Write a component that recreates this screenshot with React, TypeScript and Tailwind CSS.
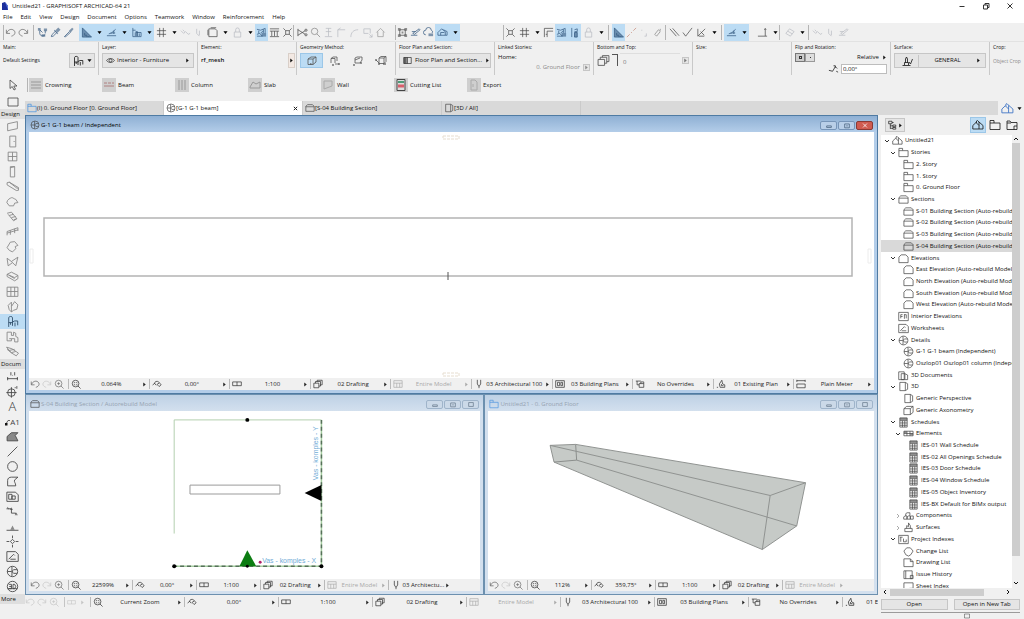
import { ReactNode } from 'react';
import clsx from 'clsx';

// d = stroked path, f = filled path, all on a 12x12 grid
const glyphs: Record<string, { d?: string; f?: string }> = {
  undo: { d: 'M1.500 3v4h4M2 6.500C3 3 7 1.500 9.500 3.500S11 9 7 10' },
  redo: { d: 'M10.500 3v4h-4M10 6.500C9 3 5 1.500 2.500 3.500S1 9 5 10' },
  pick: { d: 'M3 4v3c0 3 5 3.500 5.500 1.500M9 4v3M3 3l3 3', f: 'M1 1h3v3H1zM7.500 1.500h3.500v3H7.500zM5 8h4v2.500H5z' },
  dropper: { d: 'M1.500 10.500l.5-2 4-4 1.500 1.500-4 4z', f: 'M6 3.500L9 .5l2.500 2.500-3 3zM5 3l4 4-.8.800-4-4z' },
  syringe: { d: 'M1.500 10.500l5.500-5.500 1 1-5 4.500z', f: 'M6.500 4L10 .8 11.500 2.200 8.500 6z' },
  ruler: { d: 'M1.500 1v10h10zM4 6.500v2.500h2.500M6.500 11V9.500M8.500 11v-1', f: 'M1.500 1v10h10zM4 6.500v2.500h2.500z' },
  snap: { d: 'M1 9.500h10M3 7.500l3-1 4.500-4M5 6.500h5M8.500 7.500V4' },
  gridbox: { d: 'M2 1v9.500h9V6H5M5 5h2v5M9 7v3M2 3.500h3', f: 'M4 6h3v4H4z' },
  hash: { d: 'M4 1v10M8 1v10M1 4h10M1 8h10' },
  wave: { d: 'M1 4l3 3 2-2 3 3 2-1M3 3l2 2' },
  brush: { d: 'M4 2v5l3 3M7 4v5' },
  doc: { d: 'M2 2h7l2 2v6.500H2zM4 .8h6M1 3v6' },
  lock: { d: 'M2.500 5.500h7V11h-7zM4 5.500V3a2 2 0 0 1 4 0v2.500' },
  sheets: { d: 'M1 2.500l4 1 5-2v5M3 4v3M8 2.500v4M5 6.500l3-2M1 8l3-1 3 3H1', f: 'M6 6.500h5v4H6z' },
  columns: { d: 'M1 2h10M3 4.500V10M6 4.500V10M9 4.500V10M1 10.500h10M1 4.500h10' },
  cross: { d: 'M1.500 1.500L4 4M10.500 1.500L8 4M1.500 10.500L4 8M10.500 10.500L8 8M4 4h4v4H4z' },
  scissors: { d: 'M1 3l8 5M1 9l8-5M11 8.500a1.200 1.200 0 1 1-2.400 0 1.200 1.200 0 0 1 2.400 0M11 3.500a1.200 1.200 0 1 1-2.400 0 1.200 1.200 0 0 1 2.400 0M1 2v8' },
  search: { d: 'M7.500 7.500L11 11M8.500 4.800a3.500 3.500 0 1 1-7 0 3.500 3.500 0 0 1 7 0' },
  ibeam: { d: 'M3 1.500h6M6 1.500V10M2 10.500h8M3 5h6' },
  corner: { d: 'M2 11V3h8M5 1l-3 2' },
  arc: { d: 'M2 11c0-5 3-8 8-8' },
  stretch: { d: 'M2 2h7v5M2 2v5h5M8 8l3 3M11 8v3H8' },
  house: { d: 'M1.500 6L6 1.500 10.500 6M3 5v5.500h6V5' },
  group: { d: 'M3 3h6v6H3z', f: 'M1 1h3v3H1zM8 1h3v3H8zM1 8h3v3H1zM8 8h3v3H8zM5 5h2v2H5z' },
  edit: { d: 'M1 9h7M3 7l7-5 1 1-6 5zM2 5h4' },
  cloud: { d: 'M3 8.500a2.500 2.500 0 0 1 0-5 3 3 0 0 1 6 0 2 2 0 0 1 1 3', f: 'M6 7h5v3H6z' },
  loop: { d: 'M1 9V6l4-4 4 3v4zM4 9V6h4M7 3l4 2v4H9' },
  wall: { d: 'M1.500 11V1.500H11M4.500 11V4.500H11M3 8h1.500' },
  flagcol: { d: 'M3 1v10M6 3l3-1v3H6M6 6h3v5H6z', f: 'M6 6h3v5H6z' },
  dash: { d: 'M1 11l3-3M5.500 6.500l1-1M8 4l3-3' },
  pair: { d: 'M3 3v1M8 7v3H6' },
  magnet: { d: 'M3 8l4-5 2 2-4 5zM9 2v2' },
  parallel: { d: 'M1 2l7 8M4 1.500l7 8' },
  tick: { d: 'M1 6l3 4 7-9' },
  angle: { d: 'M2 2v8l8-8M3 10h6M5 5l4 4' },
  axis: { d: 'M1 10h8V2M9 10h2M8 3l1-1.500L10 3' },
  eraser: { d: 'M2 7l4-5 5 3-4 5zM4 4.500l5 3' },
  eye: { d: 'M.8 6C3 2.500 9 2.500 11.200 6 9 9.500 3 9.500.8 6zM8 6a2 2 0 1 1-4 0 2 2 0 0 1 4 0' },
  chair: { d: 'M2.500 11V2.500c0-1.500 3.500-1.500 3.500 0V6.500M2.500 7H6M6 6.500l2-1h2.800v4M6 6.500v3.500M8.300 7v3.500M4.200 7v2' },
  cube: { d: 'M2 4l3-2h5v5l-3 2.500H2zM2 4h5v5.500M7 4l3-2', f: 'M4 8h1.500v2H4z' },
  cubeA: { d: 'M2 8V3.500L4 2h4v4M2 3.500h4V8M6 9h4', f: 'M3 9h2v2H3zM9 8h2v2H9z' },
  cubeB: { d: 'M3 3l2-1h5v3L8 8H3zM3 5l5-2', f: 'M1 9h2v2H1zM8 7h2v2H8z' },
  cubeC: { d: 'M4 3l2-1.500h5v5L9 8.500H4zM4 3h5v5.500M9 3l2-1.500M1 5l3 3', f: 'M0 4h2v2H0zM3 8h2v2H3zM8 8h3v2H8z' },
  planhalf: { d: 'M1 2h10v8H1zM6 2v8', f: 'M1 2h4v8H1z' },
  marker: { d: 'M1.500 10.500h8M3.500 10V7.500h4V10M4.500 7.500V4l1-2 1 2v3.500M8 7l1.500 2L11.500 4' },
  angleIn: { d: 'M1 8l4 1 3-5 2 2M6 3h2v2M9 9l2 1' },
  cursor: { d: 'M3 1v8.500l2.200-2L7 11l1.500-.8L6.800 7H10z' },
  marquee: { d: 'M1 2h10v8H1z' },
  toolWall: { d: 'M1.500 3.500l9-2v6.500l-5 1-4 1z' },
  toolDoor: { d: 'M3.500 1h5.500v10H3.500zM7 6h1' },
  toolWindow: { d: 'M2 2h8v8H2zM6 2v8M2 6h8' },
  toolColumn: { d: 'M4 1.500h4V11H4zM4 2.500l4-1' },
  toolBeam: { d: 'M1 2.500l2-.5 8.500 5v2.500l-2 .2L1 4.500zM3 2l7 5.500h1.500' },
  toolSlab: { d: 'M.8 7C1 4 4 3 5 2.500s2 1 4 1.500l2 3-3 .5-1 2.500H3z' },
  toolStair: { d: 'M1 3l4-1 5 6-3 2-5-6M3 5l4-1M5 7l4-1M7 9l3-1' },
  toolRail: { d: 'M1 9.500V6l10-3.500v3M4 9V5M8 7.500V3.500M1 7.500l10-3' },
  toolRoof: { d: 'M1 7l3-5 4-.5L11 5 8.500 6l.5 2-3 3-3-1.500z' },
  toolShell: { d: 'M1 3l4 3 6-4-2 8-3-3-4 3zM5 6l1 1' },
  toolSky: { d: 'M1 4l4-2 6 3v3L8 10 1 6zM3 5l5 3M1 4l7 3 3-2' },
  toolCurtain: { d: 'M1 2h10v8.500H1zM1 6h10M4.500 2v8.500M8 2v8.500' },
  toolMorph: { d: 'M2 5l3-3v4l3-4.500 3 3-1 4-3 1-2 1.500L3 9zM5 6v5' },
  toolZone: { d: 'M1 2h4v3h2V2l2 1v3l2 1v4H8V8H5v2H1zM3 8h2' },
  toolMesh: { d: 'M.5 2l5 1.500 6 4-2 2.500-5-3zM3 5l5-1M5 7l4-1M1 4l4 3' },
  dimension: { d: 'M1 8h10M1.500 6.500v3M10.500 6.500v3M4.500 2v3M6 5h.500M8 2v3' },
  level: { d: 'M8.500 7a3.500 3.500 0 1 1-7 0 3.500 3.500 0 0 1 7 0M.3 7h9.500M5 2v9.700M8 2.500h1M10 1v2.500' },
  fill: { d: 'M1 10V6l4-3.500h6L8.500 5l2.500 5z', f: 'M1 10V6l4-3.500h6L8.500 5l2.500 5z' },
  line: { d: 'M1.500 10.500l9-9' },
  circle: { d: 'M10.500 6a4.500 4.500 0 1 1-9 0 4.500 4.500 0 0 1 9 0' },
  poly: { d: 'M1.500 10V5c0-2 1.500-3 3.500-3h6L8 4.500c-1 2 1 2.500 1 5.500z' },
  drawing: { d: 'M.8 2h8l2.500 2.500V10.500H.8zM2.500 4h3v4.500h-3zM5.500 5.500h3v3h-3z' },
  spline: { d: 'M1.500 3.500h3.500v4h4v1', f: 'M0 4l1.500-2.500L3 4zM3.500 4.500L5 2l1.500 2.500zM8 9.500l1.500-2.500 1.500 2.500z' },
  section: { d: 'M.5 9.500h11', f: 'M4 9L6 5l2 4z' },
  target: { d: 'M6 .5V3M6 9v2.500M.5 6H3M9 6h2.500M6 4l2 2-2 2-2-2z' },
  worksheet: { d: 'M.8 1.500h8l2.500 2.500v6.500H.8zM2.500 8.500L7 4l1 1M4 8.500h5' },
  globe: { d: 'M10.800 6A4.800 4.800 0 1 1 1.200 6a4.800 4.800 0 0 1 9.600 0M1.200 6h4M10.300 4.300H7a2 2 0 0 0 0 3.400h3.300M5.500 1.500v9' },
  globe3: { d: 'M10.800 6A4.800 4.800 0 1 1 1.200 6a4.800 4.800 0 0 1 9.600 0M2.500 4h2.500v4H2.500M3 6h2M6.500 8V4H8l1 2-1 2zM1.500 8h9' },
  folder: { d: 'M1 10.500V1.500h4V4h6v6.500zM1 4h4' },
  sect: { d: 'M1 10V4l2-2h6l2 2v6zM1 4.500h10' },
  elev: { d: 'M1 10.500V4.500L3.500 2h5L11 4.500v6z' },
  cubeDoc: { d: 'M2 1.500h6l2.500 1.500v6L8 10.500H2zM8 1.500v9' },
  home: { d: 'M.8 10V6.500L4 3.500l3 3V10zM4.500 4V2l1-.5L7 3l4 3.500V10H7M7 3v3.500' },
  chooser: { d: 'M2 1.500h4v3H2zM4 4.500v6M4 7h3M4 10h3M7 6h3.500v2H7zM7 9h3.500v2H7zM6 3h2' },
  clone: { d: 'M1 2h3l1 1.500h6v7H1zM8 7h3M8 7v3.500M1 4h4' },
  interior: { d: 'M.8 1.500h10.400v9H.8zM3 4v4M3 4h2M3 6h2M7 3.500v5M9 4v4M7 4h2' },
  docs3: { d: 'M.8 2h6v8.500h-6zM3.500 4h4l3 1.500v5h-7zM7.500 4v6' },
  axo: { d: 'M1 4l3-2.500h7V8l-3 2.500H1zM1 4h7v6.500M8 4l3-2.500' },
  table: { d: 'M2 1h8v10H2zM2 4h8M2 6.500h8M2 9h8M4.800 4v7M7.400 4v7', f: 'M2 1h8v2.500H2z' },
  bricks: { d: 'M1 3.500h10v5H1zM4.300 3.500v5M7.600 3.500v5M1 6h10', f: 'M1 3.500h3v2H1zM8 6h3v2H8z' },
  comps: { d: 'M.8 10V7.500l1.500-1h2V10zM4.500 10V7.500l1.500-1h2V10zM8 10V7.500l1-1h2.200V10zM3 6.500V4l1.500-1h3v3.500' },
  surf: { d: 'M2 10.500h8V7H2zM4 7V4l2 1V1l2 3v3' },
  index: { d: 'M.8 1.500h10.400v9H.8zM3 3.500v5M2 3.500h3M6 5v3.500h3V6' },
  change: { d: 'M4 2h4l3 3.500L8.500 9.500 6 11 3 9.500 1 5.500z' },
  dwglist: { d: 'M1 2h7l3 3v5.500H1zM8 2v3h3' },
  issue: { d: 'M1 2h9v8.500H1zM3 2v8.500M8 7h3v3.500H8z' },
  sheet: { d: 'M1 2h10v8.500H1zM7 8h4' },
  zoomIn: { d: 'M8.300 8.300L11.500 11.500M9.500 5.500a4 4 0 1 1-8 0 4 4 0 0 1 8 0M3.800 5.500h3.500M5.500 3.800v3.500' },
  zoomFit: { d: 'M8.300 8.300L11.500 11.500M9.500 5.500a4 4 0 1 1-8 0 4 4 0 0 1 8 0', f: 'M3.500 3.500h2L3.500 5.500zM7.500 7.500h-2l2-2zM7.500 3.500v2l-2-2zM3.500 7.500v-2l2 2z' },
  rotate: { d: 'M.8 7.500L3 5l2 2.500M3 5.500C3 3 6 2 8 3.500L11 7 8.500 9 6 6.500 8.500 5' },
  scale: { d: 'M.8 3.500h10.400V8H.8zM6 3.500V8' },
  layers: { d: 'M1 5h6v5.500H1zM3 5V3h6v5.500H7M5 3V1.500h6V7H9' },
  model: { d: 'M1 2h10v8H1zM1 5h10M4.500 5v5M8 5v5' },
  pen: { d: 'M4 1v5l2 3 2-3V1M6 9v2' },
  plans: { d: 'M.8 2h10.400v8H.8zM3 4h2.500v4H3zM7 4h2v4H7z' },
  overrides: { d: 'M5 10V5.500h5.500V10zM7 5.500V3.500h3.500v2M1 2.500h6M2.500 2.500V7H5' },
  reno: { d: 'M1 10h1.500M5 10L4 6l3-4.500L8 6l2.500 1v3zM6.500 6v2H9' },
  meter: { d: 'M1 6h10v4.500H1zM1 2h10M1 1v2.500M11 1v2.500' },
};

function Icon({ name, className }: { name: string; className?: string }) {
  const g = glyphs[name];
  return (
    <svg viewBox="0 0 12 12" className={clsx('shrink-0', className ?? 'size-3')} aria-hidden="true">
      {g.f && <path d={g.f} fill="currentColor" opacity="0.6" />}
      {g.d && <path d={g.d} fill="none" stroke="currentColor" strokeWidth="0.8" />}
    </svg>
  );
}

const Caret = ({ down }: { down?: boolean }) => (
  <svg viewBox="0 0 6 6" className="size-[5px] shrink-0" aria-hidden="true">
    <path d={down ? 'M.5 1.500h5L3 4.800z' : 'M1.500.5v5L4.500 3z'} fill="currentColor" />
  </svg>
);

// ---------- Title + menu ----------
const menuItems = ['File', 'Edit', 'View', 'Design', 'Document', 'Options', 'Teamwork', 'Window', 'Reinforcement', 'Help'];

const TitleBar = () => (
  <header className="shrink-0 bg-white">
    <div className="flex h-3 items-center justify-between pl-[2px] pr-[9px]">
      <div className="flex items-center gap-[4px]">
        <svg viewBox="0 0 6 8" className="h-2 w-[6px]" aria-hidden="true">
          <path d="M0 1l3-1 3 4v4H0z" fill="#1c2f9c" />
          <path d="M3 0l3 4v4z" fill="#5a78dc" />
        </svg>
        <h1 className="leading-3">Untitled21 - GRAPHISOFT ARCHICAD-64 21</h1>
      </div>
      <div className="flex items-center gap-[14px]">
        <button aria-label="Minimize">
          <svg viewBox="0 0 10 10" className="size-[10px]"><path d="M2.500 5.500h5" stroke="#333" fill="none" /></svg>
        </button>
        <button aria-label="Restore">
          <svg viewBox="0 0 10 10" className="size-[10px]"><path d="M2.500 4h4v4h-4zM4 4V2.500h4v4H6.500" stroke="#333" fill="none" /></svg>
        </button>
        <button aria-label="Close">
          <svg viewBox="0 0 10 10" className="size-[10px]"><path d="M2.500 2.500l5 5M7.500 2.500l-5 5" stroke="#333" fill="none" /></svg>
        </button>
      </div>
    </div>
    <nav className="flex h-[11px] items-center gap-2 pl-[3px]">
      {menuItems.map((item) => (
        <button key={item}>{item}</button>
      ))}
    </nav>
  </header>
);

// ---------- Icon toolbar ----------
type Tool = { icon: string; menu?: boolean; on?: boolean; tone?: string };

const Group = ({ tools, className }: { tools: Tool[]; className: string }) => (
  <div className={clsx('flex h-[15px] shrink-0 items-center', className)}>
    {tools.map((t, i) => (
      <button
        key={i}
        aria-label={t.icon}
        className={clsx(
          'flex h-[17px] shrink-0 items-center',
          t.on && 'bg-[#bcdcf4]',
          t.tone ?? 'text-[#4a4a4a]'
        )}
      >
        <span className={clsx('flex justify-center', t.menu ? 'w-[15px]' : 'w-[13px]')}>
          <Icon name={t.icon} className="size-[11px]" />
        </span>
        {t.menu && (
          <span className="flex w-[10px] justify-center text-black">
            <Caret down />
          </span>
        )}
      </button>
    ))}
  </div>
);

const faint = 'text-[#b9bcc2]';
const blue = 'text-[#33587f]';
const line = 'border-l border-[#b4b4b4]';

const Toolbar = () => (
  <div className="flex h-[18px] shrink-0 items-center overflow-hidden bg-[#f0f0f0]" role="toolbar">
    <Group className={clsx('ml-[3px] w-[30px]', line)} tools={[{ icon: 'undo', tone: 'text-[#666]' }, { icon: 'redo', tone: 'text-[#666]' }]} />
    <Group className={clsx('w-[46px] pl-[2px]', line)} tools={[{ icon: 'pick', tone: blue }, { icon: 'dropper', tone: blue }, { icon: 'syringe', tone: blue }]} />
    <Group
      className="w-[75px]"
      tools={[
        { icon: 'ruler', menu: true, on: true, tone: blue },
        { icon: 'snap', menu: true, on: true, tone: blue },
        { icon: 'gridbox', menu: true, on: true, tone: blue },
      ]}
    />
    <Group
      className="w-[139px]"
      tools={[
        { icon: 'hash', menu: true },
        { icon: 'wave', tone: faint },
        { icon: 'brush', tone: faint },
        { icon: 'doc', menu: true },
        { icon: 'lock', menu: true, tone: faint },
        { icon: 'sheets', on: true, tone: blue },
        { icon: 'columns' },
        { icon: 'cross' },
      ]}
    />
    <Group
      className={clsx('w-[102px] pl-[2px]', line)}
      tools={[
        { icon: 'scissors' },
        { icon: 'search', tone: 'text-[#888]' },
        { icon: 'ibeam', tone: faint },
        { icon: 'corner', tone: faint },
        { icon: 'arc', tone: faint },
        { icon: 'stretch', tone: faint },
        { icon: 'house', tone: 'text-[#999]' },
      ]}
    />
    <Group
      className={clsx('w-[108px]', line)}
      tools={[{ icon: 'group' }, { icon: 'edit', tone: blue }, { icon: 'cloud', tone: blue }, { icon: 'loop', menu: true, on: true, tone: blue }]}
    />
    <Group
      className={clsx('w-[105px]', line)}
      tools={[
        { icon: 'cross' },
        { icon: 'hash', menu: true },
        { icon: 'wall' },
        { icon: 'sheets', on: true, tone: blue },
        { icon: 'flagcol', on: true, tone: blue },
        { icon: 'lock', menu: true, tone: faint },
      ]}
    />
    <Group
      className={clsx('w-[57px] pl-[3px]', line)}
      tools={[{ icon: 'ruler', on: true, tone: blue }, { icon: 'dash', tone: 'text-[#c58a7a]' }, { icon: 'pair', tone: faint }, { icon: 'magnet', tone: 'text-[#888]' }]}
    />
    <Group className={clsx('w-[56px] pl-[2px]', line)} tools={[{ icon: 'parallel' }, { icon: 'tick' }, { icon: 'angle', menu: true }]} />
    <Group className={clsx('w-[58px] gap-[6px] pl-[2px]', line)} tools={[{ icon: 'snap', menu: true, on: true, tone: blue }, { icon: 'axis', menu: true }]} />
    <Group className={clsx('w-[29px] pl-[2px]', line)} tools={[{ icon: 'eraser', menu: true, tone: faint }]} />
    <Group className={clsx('pl-[2px]', line)} tools={[{ icon: 'wave', tone: faint }, { icon: 'brush', tone: faint }, { icon: 'edit', tone: faint }]} />
  </div>
);

// ---------- Info box ----------
const Panel = ({ label, children }: { label: string; children?: ReactNode }) => (
  <section className="flex w-[99px] shrink-0 flex-col border-r border-[#c9c9c9] px-[3px] last:w-auto last:flex-1 last:shrink last:border-r-0 last:pr-0">
    <h2 className="h-[11px] whitespace-nowrap text-[5px] leading-[11px]">{label}</h2>
    {children}
  </section>
);

const flat = 'flex items-center border border-[#c6c6c6] bg-[#e5e5e5]';

const InfoBox = () => (
  <div className="flex h-[34px] shrink-0 overflow-hidden border-t border-[#e2e2e2] bg-[#f0f0f0]">
    <Panel label="Main:">
      <div className="flex items-center justify-between">
        <span className="whitespace-nowrap text-[5px]">Default Settings</span>
        <button className={clsx(flat, 'h-[15px] w-[26px] justify-around')} aria-label="Default settings">
          <Icon name="chair" />
          <Caret down />
        </button>
      </div>
    </Panel>
    <Panel label="Layer:">
      <button className={clsx(flat, 'h-[15px] gap-[2px] px-[3px]')}>
        <Icon name="eye" className="size-[9px]" />
        <span className="flex-1 text-left">Interior - Furniture</span>
        <Caret />
      </button>
    </Panel>
    <Panel label="Element:">
      <div className="-mr-[2px] flex h-[15px] items-center justify-between">
        <span className="font-semibold">rf_mesh</span>
        <button className="flex h-[15px] w-[7px] items-center justify-center border border-[#d9cfc8] bg-[#f3e9e3]" aria-label="Element name">
          <Caret />
        </button>
      </div>
    </Panel>
    <Panel label="Geometry Method:">
      <div className="flex">
        {['cube', 'cubeA', 'cubeB', 'cubeC'].map((c, i) => (
          <button key={c} aria-label={c} className={clsx('flex h-[15px] w-[23px] items-center justify-center text-[#555]', i === 0 && 'border border-[#9cc7e8] bg-[#bcdcf4]')}>
            <Icon name={c} />
          </button>
        ))}
      </div>
    </Panel>
    <Panel label="Floor Plan and Section:">
      <button className={clsx(flat, 'h-[15px] gap-[3px] px-[3px]')}>
        <Icon name="planhalf" className="size-[9px]" />
        <span className="flex-1 whitespace-nowrap text-left">Floor Plan and Section...</span>
        <Caret />
      </button>
    </Panel>
    <Panel label="Linked Stories:">
      <span className="leading-[8px]">Home:</span>
      <div className="flex items-center justify-end gap-[3px] pt-[2px] text-[#8a8a8a]">
        <span>0. Ground Floor</span>
        <button className={clsx(flat, 'size-[7px] justify-center')} aria-label="Home story"><Caret /></button>
      </div>
    </Panel>
    <Panel label="Bottom and Top:">
      <div className="flex items-center gap-[2px] text-[#777]">
        <Icon name="layers" className="size-[13px] text-[#555]" />
        <span className="flex h-3 w-[6px] flex-col justify-between border-r border-t border-[#555]" />
        <span className="flex h-[14px] flex-1 flex-col justify-end border-t border-[#dedede] pl-[3px]">0</span>
        <button className={clsx(flat, 'size-[7px] justify-center')} aria-label="Top offset"><Caret /></button>
      </div>
    </Panel>
    <Panel label="Size:" />
    <Panel label="Flip and Rotation:">
      <div className="flex h-[9px] items-center justify-between">
        <div className="flex">
          <button className="flex h-[9px] w-[10px] items-center justify-center border border-[#777] bg-[#ccc]" aria-label="Flip"><span className="size-[3px] border border-[#333]" /></button>
          <button className="flex h-[9px] w-[10px] items-center justify-center border border-[#999] bg-[#ddd]" aria-label="Mirror"><span className="size-[1px] bg-[#333]" /></button>
        </div>
        <button className="flex items-center gap-[3px]">
          Relative <Caret />
        </button>
      </div>
      <div className="flex items-center justify-end gap-[2px] pt-[1px]">
        <Icon name="angleIn" className="size-[11px]" />
        <input aria-label="Rotation angle" defaultValue="0,00°" className="h-[10px] w-[46px] border border-[#bdbdbd] bg-white px-[1px] text-[6px]" />
      </div>
    </Panel>
    <Panel label="Surface:">
      <button className={clsx(flat, 'h-[15px]')}>
        <span className="flex w-6 justify-center border-r border-[#c6c6c6]"><Icon name="marker" /></span>
        <span className="flex-1">GENERAL</span>
        <span className="w-[9px]"><Caret /></span>
      </button>
    </Panel>
    <Panel label="Crop:">
      <span className="whitespace-nowrap pt-[4px] text-[5px] text-[#8a8a8a]">Object Crop</span>
    </Panel>
  </div>
);

// ---------- Toolbox ----------
const designTools = ['toolWall', 'toolDoor', 'toolWindow', 'toolColumn', 'toolBeam', 'toolSlab', 'toolStair', 'toolRail', 'toolRoof', 'toolShell', 'toolSky', 'toolCurtain', 'toolMorph', 'chair', 'toolZone', 'toolMesh'];
const documentTools = ['dimension', 'level', 'letterA', 'labelA1', 'fill', 'line', 'circle', 'poly', 'drawing', 'spline', 'section', 'target', 'worksheet', 'globe', 'globe3'];

const ToolHeading = ({ children }: { children: ReactNode }) => (
  <h3 className="h-[10px] overflow-hidden bg-[#dedede] pl-[1px] leading-[10px]">{children}</h3>
);

const ToolButton = ({ name, dark }: { name: string; dark?: boolean }) => (
  <button
    aria-label={name}
    className={clsx('flex h-[15px] w-full items-center justify-center', name === 'chair' ? 'bg-[#bcdcf4] text-[#2c4a66]' : dark ? 'text-[#444]' : 'text-[#858585]')}
  >
    {name === 'letterA' && <span className="text-[13px] font-light">A</span>}
    {name === 'labelA1' && (
      <span className="flex items-center text-[8px]">
        <svg viewBox="0 0 5 8" className="h-2 w-[5px]" aria-hidden="true">
          <path d="M0 5h2.500v2.500H0z" fill="#111" />
          <path d="M1.500 5L3 2.500h2" fill="none" stroke="currentColor" strokeWidth="0.8" />
        </svg>
        A1
      </span>
    )}
    {glyphs[name] && <Icon name={name} className="size-[13px]" />}
  </button>
);

const Toolbox = () => (
  <aside className="w-[25px] shrink-0 overflow-hidden bg-[#f0f0f0]">
    <div className="flex h-[34px] flex-col items-center gap-[5px] pt-[4px] text-[#444]">
      <button aria-label="Arrow"><Icon name="cursor" /></button>
      <button aria-label="Marquee"><Icon name="marquee" /></button>
    </div>
    <ToolHeading>Design</ToolHeading>
    {designTools.map((t) => <ToolButton key={t} name={t} />)}
    <ToolHeading>Docum</ToolHeading>
    {documentTools.map((t) => <ToolButton key={t} name={t} dark />)}
    <ToolHeading>More</ToolHeading>
  </aside>
);

// ---------- Favorites + tabs ----------
const favorites = [
  { name: 'Crowning', mark: 'M2 4h10M2 7h10M2 10h10', color: '#999' },
  { name: 'Beam', mark: 'M2 5h3M6 5h3M10 5h2M2 8h10', color: '#b08080' },
  { name: 'Column', mark: 'M4 2v10M7 2v10M10 2v10', color: '#999' },
  { name: 'Slab', mark: 'M2 9l3-5 3 2 4-2v6H2z', color: '#999' },
  { name: 'Wall', mark: 'M3 3v8l8-3V3z', color: '#aaa' },
  { name: 'Cutting List', mark: '', color: '#555' },
  { name: 'Export', mark: 'M4 2h4l2 2v8H4zM6 6v3', color: '#aaa' },
];

const Favorites = () => (
  <div className="flex h-[26px] shrink-0 bg-[#f0f0f0] pl-[2px] pt-[3px]">
    <div className={clsx('flex h-[14px] pl-[1px]', line)}>
      {favorites.map((f) => (
        <button key={f.name} className="flex w-[73px] items-center gap-[2px]">
          <svg viewBox="0 0 14 14" className="size-[14px]" aria-hidden="true">
            <path d="M0 0h14v14H0z" fill="#cfcfcf" />
            {f.name === 'Cutting List' ? (
              <>
                <path d="M3 1.500h8v11H3z" fill="#ddd" stroke="#444" />
                <path d="M4 3h6v2H4z" fill="#4d9b77" />
                <path d="M4 6.500h6v3H4z" fill="#d8606c" />
              </>
            ) : (
              <path d={f.mark} fill="none" stroke={f.color} />
            )}
          </svg>
          {f.name}
        </button>
      ))}
    </div>
  </div>
);

const tabs = [
  { icon: 'folder', label: '(I) 0. Ground Floor [0. Ground Floor]' },
  { icon: 'globe', label: '[G-1 G-1 beam]', on: true },
  { icon: 'sect', label: '[S-04 Building Section]' },
  { icon: 'cubeDoc', label: '[3D / All]' },
];

const Tabs = () => (
  <div className="flex h-[14px] shrink-0 bg-[#f0f0f0]">
    <div className="flex flex-1 bg-[#d9d9d9]" role="tablist">
      {tabs.map((t) => (
        <button
          key={t.label}
          role="tab"
          aria-selected={!!t.on}
          className={clsx('flex w-[139px] items-center border-r border-[#cacaca] pl-[2px] pr-[4px]', t.on && 'bg-white')}
        >
          <Icon name={t.icon} className={clsx('size-[10px]', t.icon === 'folder' ? 'text-[#3a8be0]' : 'text-[#444]')} />
          <span className="flex-1 text-left">{t.label}</span>
          {t.on && (
            <svg viewBox="0 0 6 6" className="size-[5px]" aria-hidden="true"><path d="M1 1l4 4M5 1L1 5" stroke="#222" strokeWidth="1.200" /></svg>
          )}
        </button>
      ))}
    </div>
    <button className="flex w-[26px] items-center justify-center gap-[3px]" aria-label="Navigator">
      <Icon name="home" className="size-[13px] text-[#3b72c4]" />
      <Caret down />
    </button>
  </div>
);

// ---------- View windows ----------
type Cell = { icon: string; text: string; off?: boolean };

const cells = (zoom: string, angle: string, arch = '03 Architectural 100'): Cell[] => [
  { icon: 'zoomFit', text: zoom },
  { icon: 'rotate', text: angle },
  { icon: 'scale', text: '1:100' },
  { icon: 'layers', text: '02 Drafting' },
  { icon: 'model', text: 'Entire Model', off: true },
  { icon: 'pen', text: arch },
  { icon: 'plans', text: '03 Building Plans' },
  { icon: 'overrides', text: 'No Overrides' },
  { icon: 'reno', text: '01 Existing Plan' },
  { icon: 'meter', text: 'Plain Meter' },
];

const ViewCell = ({ cell, className }: { cell: Cell; className: string }) => (
  <button className={clsx('flex h-[10px] items-center overflow-hidden border-l border-[#b9b9b9] pl-[2px]', cell.off ? 'text-[#a9a9a9]' : 'text-[#222]', className)}>
    <Icon name={cell.icon} className="size-[10px]" />
    <span className="min-w-0 flex-1 whitespace-nowrap text-center">{cell.text}</span>
    <Caret />
    <span className="w-[2px]" />
  </button>
);

const ZoomButtons = () => (
  <div className="flex w-[39px] shrink-0 items-center gap-[2px] pl-[1px]">
    <button aria-label="Previous zoom"><Icon name="undo" className="size-[10px] text-[#555]" /></button>
    <button aria-label="Next zoom"><Icon name="redo" className="size-[10px] text-[#c4c4c4]" /></button>
    <button aria-label="Zoom in"><Icon name="zoomIn" className="size-[10px] text-[#666]" /></button>
  </div>
);

type ViewWindowProps = {
  title: string;
  icon: string;
  active?: boolean;
  items: Cell[];
  filler?: boolean;
  iconTone?: string;
  className: string;
  children: ReactNode;
};

const ViewWindow = ({ title, icon, active, items, filler, iconTone, className, children }: ViewWindowProps) => (
  <section
    className={clsx(
      'flex min-h-0 flex-col border p-[3px] pt-0',
      active ? 'border-[#4f7ba3] bg-[#b3cde9]' : 'border-[#6c90af] bg-[#d3e0ee]',
      className
    )}
  >
    <div className={clsx('-mx-[3px] flex h-4 shrink-0 items-center justify-between px-[4px] pt-[2px]', active ? 'bg-linear-to-b from-[#8fb0d4] to-[#b3cde9]' : 'bg-linear-to-b from-[#bed1e5] to-[#d3e0ee]')}>
      <h2 className={clsx('flex items-center gap-[1px]', active ? 'text-black' : 'text-[#96a3b1]')}>
        <Icon name={icon} className={clsx('size-[10px]', iconTone ?? 'text-[#444]')} />
        {title}
      </h2>
      <div className="flex gap-[1px]">
        {['M3 5h6v2H3z', 'M3 2.500h6v5H3zM5 5h2', 'M3 2h6v5H3z'].map((d, i) => (
          <button
            key={d}
            aria-label={['Minimize', 'Maximize', 'Close'][i]}
            className={clsx(
              'flex h-[9px] w-[17px] items-center justify-center rounded-[2px] border',
              active && i === 2 ? 'border-[#8a3a35] bg-[#cf5b50] text-white' : active ? 'border-[#7795b8] bg-[#b9cfe8] text-[#4b6480]' : 'border-[#9fb4ca] bg-[#cbd9e8] text-[#6d7f92]'
            )}
          >
            <svg viewBox="0 0 12 9" className="h-[7px] w-[10px]" aria-hidden="true">
              <path d={active && i === 2 ? 'M3.500 2l5 5M8.500 2l-5 5' : d} fill="none" stroke="currentColor" />
            </svg>
          </button>
        ))}
      </div>
    </div>
    <div className="min-h-0 flex-1 overflow-hidden bg-white">{children}</div>
    <div className="flex h-3 shrink-0 items-center bg-[#f0f0f0]">
      <ZoomButtons />
      {items.map((c) => <ViewCell key={c.icon} cell={c} className="min-w-0 flex-1" />)}
      {filler && <span className="w-7 shrink-0" />}
    </div>
  </section>
);

const BeamElevation = () => (
  <svg viewBox="0 0 845 246" className="size-full" role="img" aria-label="Beam elevation">
    <path d="M15 86h808v58H15z" fill="none" stroke="#b4b4b4" strokeWidth="1.500" />
    <path d="M419 140v8" stroke="#555" />
    <path d="M414 4h16v3h-16zM414 241h16v3h-16z" fill="none" stroke="#e6ddcf" strokeDasharray="3 1" />
    <path d="M1 117h3v14H1zM839 117h3v14h-3z" fill="none" stroke="#ececec" />
  </svg>
);

const SectionPlan = () => (
  <svg viewBox="0 0 451 170" className="size-full" role="img" aria-label="Section plan">
    <path d="M144 124V9h149" fill="none" stroke="#b3cfae" />
    <path d="M293 9v148H144" fill="none" stroke="#a5cda0" strokeWidth="1.500" />
    <path d="M293 9v148H144" fill="none" stroke="#56705a" strokeWidth="1.500" strokeDasharray="4 3" />
    <path d="M160 75h91v9h-91z" fill="none" stroke="#999" />
    <path d="M276 83l17-8v16z" fill="#000" />
    <path d="M218 141l9 16h-17z" fill="#0c7d12" />
    <circle cx="218" cy="9" r="2" />
    <circle cx="144" cy="157" r="2" />
    <circle cx="293" cy="157" r="2" />
    <circle cx="218" cy="157" r="1.500" />
    <circle cx="231" cy="153" r="1.500" fill="#b0206a" />
    <text x="233" y="154" fontSize="7" fill="#6fabd6" fontFamily="Liberation Sans">Vas - komples - X</text>
    <text transform="translate(290 70) rotate(-90)" fontSize="7" fill="#6fabd6" fontFamily="Liberation Sans">Vas - komples - Y</text>
  </svg>
);

const BeamPerspective = () => (
  <svg viewBox="0 0 386 171" className="size-full" role="img" aria-label="Beam in 3D">
    <path d="M60 35l26-1 234 39-9 44-35 24L64 52z" fill="#c6cac7" />
    <path d="M86 34l1 16-23 2" fill="none" stroke="#8a8d8b" />
    <path d="M60 35l26-1 234 39-9 44-35 24L64 52zM60 35l224 51 36-13M284 86l-8 55M87 50l224 67" fill="none" stroke="#8f9290" strokeLinejoin="round" />
  </svg>
);

const BottomBar = () => (
  <div className="flex h-[14px] shrink-0 items-center overflow-hidden bg-[#f0f0f0]">
    <div className="flex w-[39px] shrink-0 items-center gap-[2px] text-[#c4c4c4]">
      <Icon name="undo" className="size-[10px]" />
      <Icon name="redo" className="size-[10px]" />
      <Icon name="zoomIn" className="size-[10px]" />
    </div>
    <div className="flex h-[10px] w-[26px] shrink-0 items-center gap-[4px] border-l border-[#c4c4c4] pl-[2px] text-[#c4c4c4]">
      <Icon name="scale" className="size-[9px]" />
      <Caret />
    </div>
    {cells('Current Zoom', '0,00°').slice(0, 8).map((c) => <ViewCell key={c.icon} cell={c} className="w-[94px] shrink-0" />)}
    <button className="flex h-[10px] min-w-0 flex-1 items-center justify-between border-l border-[#b9b9b9] pl-[2px]">
      <Icon name="reno" className="size-[10px]" />
      <span>01 E</span>
    </button>
  </div>
);

// ---------- Navigator ----------
type Row = [level: number, icon: string, label: string, open?: boolean];

const rows: Row[] = [
  [0, 'home', 'Untitled21', true],
  [1, 'folder', 'Stories', true],
  [2, 'folder', '2. Story'],
  [2, 'folder', '1. Story'],
  [2, 'folder', '0. Ground Floor'],
  [1, 'sect', 'Sections', true],
  [2, 'sect', 'S-01 Building Section (Auto-rebuild Model)'],
  [2, 'sect', 'S-02 Building Section (Auto-rebuild Model)'],
  [2, 'sect', 'S-03 Building Section (Auto-rebuild Model)'],
  [2, 'sect', 'S-04 Building Section (Auto-rebuild Model)'],
  [1, 'elev', 'Elevations', true],
  [2, 'elev', 'East Elevation (Auto-rebuild Model)'],
  [2, 'elev', 'North Elevation (Auto-rebuild Model)'],
  [2, 'elev', 'South Elevation (Auto-rebuild Model)'],
  [2, 'elev', 'West Elevation (Auto-rebuild Model)'],
  [1, 'interior', 'Interior Elevations'],
  [1, 'worksheet', 'Worksheets'],
  [1, 'globe', 'Details', true],
  [2, 'globe', 'G-1 G-1 beam (Independent)'],
  [2, 'globe', 'Oszlop01 Oszlop01 column (Independent)'],
  [1, 'docs3', '3D Documents'],
  [1, 'cubeDoc', '3D', true],
  [2, 'cubeDoc', 'Generic Perspective'],
  [2, 'axo', 'Generic Axonometry'],
  [1, 'table', 'Schedules', true],
  [2, 'bricks', 'Elements', true],
  [3, 'table', 'IES-01 Wall Schedule'],
  [3, 'table', 'IES-02 All Openings Schedule'],
  [3, 'table', 'IES-03 Door Schedule'],
  [3, 'table', 'IES-04 Window Schedule'],
  [3, 'table', 'IES-05 Object Inventory'],
  [3, 'table', 'IES-BX Default for BIMx output'],
  [2, 'comps', 'Components', false],
  [2, 'surf', 'Surfaces', false],
  [1, 'index', 'Project Indexes', true],
  [2, 'change', 'Change List'],
  [2, 'dwglist', 'Drawing List'],
  [2, 'issue', 'Issue History'],
  [2, 'sheet', 'Sheet Index'],
];

const indent = ['pl-[3px]', 'pl-[9px]', 'pl-[14px]', 'pl-[19px]'];

const Chevron = ({ d, className }: { d: string; className?: string }) => (
  <svg viewBox="0 0 6 6" className={clsx('size-[6px] shrink-0', className)} aria-hidden="true">
    <path d={d} fill="none" stroke="currentColor" />
  </svg>
);

const Navigator = () => (
  <aside className="flex w-[146px] shrink-0 flex-col bg-[#f0f0f0] pl-[3px] pr-[4px]">
    <div className="flex h-5 shrink-0 items-center justify-between pl-[4px]">
      <button className={clsx(flat, 'h-[14px] w-5 justify-around')} aria-label="Project chooser">
        <Icon name="chooser" className="size-[10px]" />
        <Caret />
      </button>
      <div className="flex gap-[1px]">
        {['home', 'folder', 'clone'].map((n, i) => (
          <button key={n} aria-label={n} className={clsx('flex size-4 items-center justify-center', i === 0 && 'border border-[#9cc7e8] bg-[#bcdcf4]')}>
            <Icon name={n} />
          </button>
        ))}
      </div>
    </div>
    <div className="flex min-h-0 flex-1">
      <div className="min-w-0 flex-1 overflow-hidden bg-white">
        <ul className="flex h-[calc(100%+4px)] flex-col">
          {rows.map(([level, icon, label, open]) => (
            <li key={label} className={clsx('min-h-0 flex-1', label.startsWith('S-04') && 'bg-[#d9d9d9]')}>
              <button className={clsx('flex h-full w-full items-center', indent[level])}>
                <span className="w-2 shrink-0">
                  {open !== undefined && <Chevron d={open ? 'M1 2l2 2 2-2' : 'M2 1l2 2-2 2'} className={open ? 'text-[#333]' : 'text-[#aaa]'} />}
                </span>
                <Icon name={icon} className="mr-[2px] size-[11px] text-[#444]" />
                <span className="whitespace-nowrap">{label}</span>
              </button>
            </li>
          ))}
        </ul>
      </div>
      <div className="flex w-2 shrink-0 flex-col items-center bg-[#f0f0f0]">
        <Chevron d="M1 4l2-2 2 2" className="my-[1px]" />
        <span className="w-full flex-1 bg-[#cdcdcd]" />
        <span className="flex h-8 items-end pb-[2px]"><Chevron d="M1 2l2 2 2-2" /></span>
      </div>
    </div>
    <div className="flex h-2 shrink-0 items-center pl-[1px] pr-[9px]">
      <Chevron d="M4 1L2 3l2 2" />
      <span className="ml-[2px] h-[7px] w-[94px] bg-[#cdcdcd]" />
      <Chevron d="M2 1l2 2-2 2" className="ml-auto" />
    </div>
    <div className="flex h-[17px] shrink-0 items-center gap-[6px] border-b border-[#9b9b9b]">
      <button className={clsx(flat, 'h-[11px] flex-1 justify-center')}>Open</button>
      <button className={clsx(flat, 'h-[11px] flex-1 justify-center whitespace-nowrap')}>Open in New Tab</button>
    </div>
    <div className="flex h-[6px] shrink-0 justify-center pl-8">
      <Icon name="marquee" className="size-[6px]" />
    </div>
  </aside>
);

const App = () => (
  <div className="flex h-screen flex-col overflow-hidden bg-[#f0f0f0] font-['Open_Sans',sans-serif] text-[6px] leading-[9px] text-[#111]">
    <TitleBar />
    <Toolbar />
    <InfoBox />
    <div className="flex min-h-0 flex-1">
      <Toolbox />
      <div className="flex min-w-0 flex-1 flex-col">
        <Favorites />
        <Tabs />
        <div className="flex min-h-0 flex-1">
          <main className="flex min-w-0 flex-1 flex-col">
            <ViewWindow className="grow basis-[279px]" title="G-1 G-1 beam / Independent" icon="globe" active items={cells('0.064%', '0,00°')}>
              <BeamElevation />
            </ViewWindow>
            <div className="flex min-h-0 grow basis-[201px]">
              <ViewWindow
                className="min-w-0 grow basis-[460px]"
                title="S-04 Building Section / Autorebuild Model"
                icon="sect"
                items={cells('22599%', '0,00°', '03 Architectu...').slice(0, 6)}
                filler
              >
                <SectionPlan />
              </ViewWindow>
              <ViewWindow
                className="min-w-0 grow basis-[394px]"
                title="Untitled21 - 0. Ground Floor"
                icon="folder"
                iconTone="text-[#4a92e0]"
                items={cells('112%', '359,75°').slice(0, 5)}
                filler
              >
                <BeamPerspective />
              </ViewWindow>
            </div>
            <BottomBar />
            <div className="h-[10px] shrink-0" />
          </main>
          <Navigator />
        </div>
      </div>
    </div>
  </div>
);

export default App;
